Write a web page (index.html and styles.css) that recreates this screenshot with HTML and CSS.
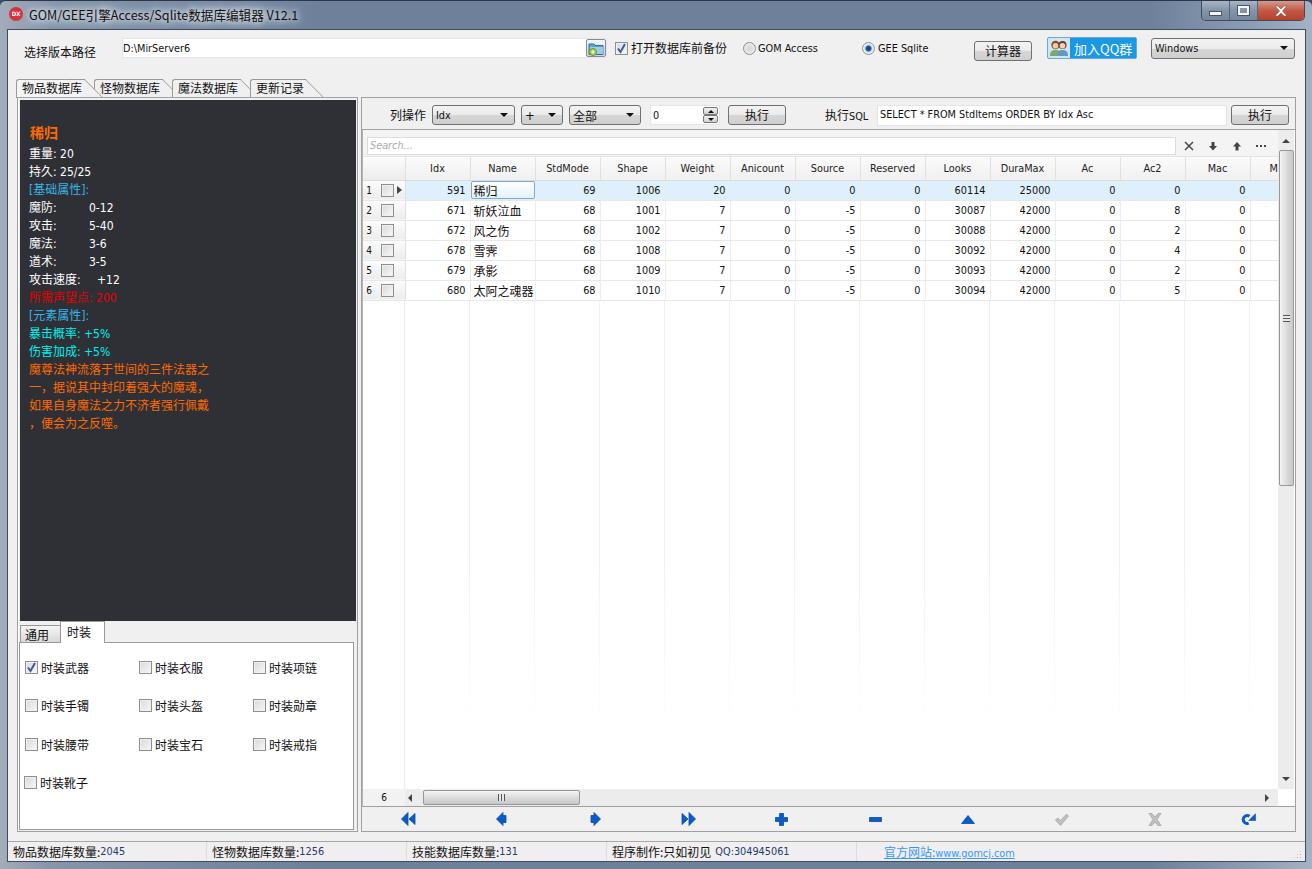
FILE: index.html
```html
<!DOCTYPE html>
<html>
    <head>
        <title>GOM/GEE引擎Access/Sqlite数据库编辑器 V12.1</title>
        <meta charset="UTF-8">
        <link rel="stylesheet" href="styles.css">
    </head>
    <body>
        <div class="window">
            <div class="titlebar">
                <div class="app-icon">DX</div>
                <div class="title-text">GOM/GEE引擎Access/Sqlite数据库编辑器 V12.1</div>
                <div class="win-buttons">
                    <div class="win-btn win-min"><span class="min-glyph"></span></div>
                    <div class="win-btn win-max"><span class="max-glyph"></span></div>
                    <div class="win-btn win-close">
                        <svg width="16" height="12" viewBox="0 0 16 12"><path d="M2 1h3l3 3 3-3h3l-4.500 5 4.500 5h-3l-3-3-3 3h-3l4.500-5z" fill="#fff" stroke="#8a4a40" stroke-width=".6"/></svg>
                    </div>
                </div>
            </div>

            <div class="client">
                <div class="pathbar">
                    <div class="path-label cn">选择版本路径</div>
                    <div class="path-input">
                        <span>D:\MirServer6</span>
                        <div class="folder-btn">
                            <svg width="16" height="15" viewBox="0 0 16 15">
                                <path d="M1 3h5l1 1.500h8v9h-14z" fill="#5ba4d8" stroke="#2f6f9f"/>
                                <path d="M2 6h13v7h-13z" fill="#9ccbec"/>
                                <circle cx="5" cy="11" r="3.500" fill="#9fd24a" stroke="#6d9a22"/>
                                <path d="M3.200 11h3.600M5 9.200v3.600" stroke="#fff" stroke-width="1.200"/>
                            </svg>
                        </div>
                    </div>
                    <div class="check checked backup-check"><svg class="tick" width="13" height="13" viewBox="0 0 13 13"><path d="M3 6.500l2.500 3.500 4.500-8" fill="none" stroke="#3c5a9c" stroke-width="2"/></svg></div>
                    <div class="backup-text cn">打开数据库前备份</div>
                    <div class="radio radio-gom"></div>
                    <div class="radio-text gom-text">GOM Access</div>
                    <div class="radio radio-on"></div>
                    <div class="radio-text gee-text">GEE Sqlite</div>
                    <div class="btn calc-btn cn">计算器</div>
                    <div class="qq-btn">
                        <div class="qq-icon">
                            <svg width="20" height="18" viewBox="0 0 20 18">
                                <circle cx="6.500" cy="6" r="4.200" fill="#8a4a2a"/>
                                <circle cx="6.500" cy="6.800" r="2.800" fill="#f4c9a4"/>
                                <path d="M1 17c0-4.500 2-6 5.500-6s5.500 1.500 5.500 6z" fill="#7fa86c"/>
                                <circle cx="13.500" cy="6" r="4" fill="#6b3a22"/>
                                <circle cx="13.500" cy="6.800" r="2.800" fill="#f7d3b3"/>
                                <path d="M8.500 17c0-4.500 1.500-6 5-6s5.500 1.500 5.500 6z" fill="#5f9ac0"/>
                            </svg>
                        </div>
                        <div class="qq-text cn">加入QQ群</div>
                    </div>
                    <div class="combo theme-combo"><span>Windows</span><i class="caret"></i></div>
                </div>

                <div class="tabs">
                    <div class="tab tab-active cn">物品数据库</div>
                    <div class="tab cn">怪物数据库</div>
                    <div class="tab cn">魔法数据库</div>
                    <div class="tab tab-short cn">更新记录</div>
                </div>

                <div class="tab-body">
                    <div class="left-pane">
                        <div class="item-card">
                            <div class="item-name">稀归</div>
                            <div>重量: 20</div>
                            <div>持久: 25/25</div>
                            <div class="c-blue">[基础属性]:</div>
                            <div><span class="stat">魔防:</span>0-12</div>
                            <div><span class="stat">攻击:</span>5-40</div>
                            <div><span class="stat">魔法:</span>3-6</div>
                            <div><span class="stat">道术:</span>3-5</div>
                            <div><span class="stat stat-long">攻击速度:</span>+12</div>
                            <div class="c-red">所需声望点: 200</div>
                            <div class="c-blue">[元素属性]:</div>
                            <div class="c-cyan">暴击概率: +5%</div>
                            <div class="c-cyan">伤害加成: +5%</div>
                            <div class="c-orange">魔尊法神流落于世间的三件法器之</div>
                            <div class="c-orange">一，据说其中封印着强大的魔魂，</div>
                            <div class="c-orange">如果自身魔法之力不济者强行佩戴</div>
                            <div class="c-orange">，便会为之反噬。</div>
                        </div>
                        <div class="sub-tabs cn">
                            <div class="sub-tab">通用</div>
                            <div class="sub-tab sub-tab-active">时装</div>
                        </div>
                        <div class="fashion-panel cn">
                            <div class="fashion-item"><div class="check checked"><svg class="tick" width="13" height="13" viewBox="0 0 13 13"><path d="M3 6.500l2.500 3.500 4.500-8" fill="none" stroke="#3c5a9c" stroke-width="2"/></svg></div>时装武器</div>
                            <div class="fashion-item"><div class="check"></div>时装衣服</div>
                            <div class="fashion-item"><div class="check"></div>时装项链</div>
                            <div class="fashion-item"><div class="check"></div>时装手镯</div>
                            <div class="fashion-item"><div class="check"></div>时装头盔</div>
                            <div class="fashion-item"><div class="check"></div>时装勋章</div>
                            <div class="fashion-item"><div class="check"></div>时装腰带</div>
                            <div class="fashion-item"><div class="check"></div>时装宝石</div>
                            <div class="fashion-item"><div class="check"></div>时装戒指</div>
                            <div class="fashion-item fashion-last"><div class="check"></div>时装靴子</div>
                        </div>
                    </div>

                    <div class="right-pane">
                        <div class="sql-bar">
                            <div class="sql-label ops-label cn">列操作</div>
                            <div class="combo idx-combo"><span>Idx</span><i class="caret"></i></div>
                            <div class="combo plus-combo"><span>+</span><i class="caret"></i></div>
                            <div class="combo all-combo"><span class="cn">全部</span><i class="caret"></i></div>
                            <div class="spin">
                                <span>0</span>
                                <div class="spin-btns">
                                    <div class="spin-btn"><div class="spin-up"></div></div>
                                    <div class="spin-btn"><div class="spin-down"></div></div>
                                </div>
                            </div>
                            <div class="btn run-btn cn">执行</div>
                            <div class="sql-label sql-text"><span class="cn">执行</span>SQL</div>
                            <div class="sql-input">SELECT * FROM StdItems ORDER BY Idx Asc</div>
                            <div class="btn run-btn cn">执行</div>
                        </div>

                        <div class="grid-frame">
                            <div class="grid-main">
                                <div class="search-row">
                                    <div class="search-box">Search...</div>
                                    <div class="search-tool">
                                        <svg width="10" height="10" viewBox="0 0 10 10"><path d="M1 1l8 8M9 1l-8 8" stroke="#444" stroke-width="1.500"/></svg>
                                    </div>
                                    <div class="search-tool">
                                        <svg width="10" height="10" viewBox="0 0 10 10"><path d="M3.500 1h3v4h2.500l-4 4.500-4-4.500h2.500z" fill="#444"/></svg>
                                    </div>
                                    <div class="search-tool">
                                        <svg width="10" height="10" viewBox="0 0 10 10"><path d="M3.500 9.500h3v-4h2.500l-4-4.500-4 4.500h2.500z" fill="#444"/></svg>
                                    </div>
                                    <div class="search-tool">
                                        <svg width="10" height="10" viewBox="0 0 10 10"><path d="M0 4h2v2h-2zM4 4h2v2h-2zM8 4h2v2h-2z" fill="#444"/></svg>
                                    </div>
                                </div>
                                <div class="table-wrap">
                                    <table class="data-table">
                                        <thead>
                                            <tr>
                                                <th class="row-head"></th>
                                                <th>Idx</th><th>Name</th><th>StdMode</th><th>Shape</th><th>Weight</th><th>Anicount</th><th>Source</th>
                                                <th>Reserved</th><th>Looks</th><th>DuraMax</th><th>Ac</th><th>Ac2</th><th>Mac</th><th>Mac2</th>
                                            </tr>
                                        </thead>
                                        <tbody>
                                            <tr class="row-current">
                                                <td class="row-head"><div class="row-head-in"><span class="row-num">1</span><div class="check"></div><i class="row-mark"></i></div></td>
                                                <td>591</td><td class="name-cell"><div class="name-focus">稀归</div></td><td>69</td><td>1006</td><td>20</td><td>0</td><td>0</td><td>0</td><td>60114</td><td>25000</td><td>0</td><td>0</td><td>0</td><td></td>
                                            </tr>
                                            <tr>
                                                <td class="row-head"><div class="row-head-in"><span class="row-num">2</span><div class="check"></div></div></td>
                                                <td>671</td><td class="name-cell">斩妖泣血</td><td>68</td><td>1001</td><td>7</td><td>0</td><td>-5</td><td>0</td><td>30087</td><td>42000</td><td>0</td><td>8</td><td>0</td><td></td>
                                            </tr>
                                            <tr>
                                                <td class="row-head"><div class="row-head-in"><span class="row-num">3</span><div class="check"></div></div></td>
                                                <td>672</td><td class="name-cell">风之伤</td><td>68</td><td>1002</td><td>7</td><td>0</td><td>-5</td><td>0</td><td>30088</td><td>42000</td><td>0</td><td>2</td><td>0</td><td></td>
                                            </tr>
                                            <tr>
                                                <td class="row-head"><div class="row-head-in"><span class="row-num">4</span><div class="check"></div></div></td>
                                                <td>678</td><td class="name-cell">雪霁</td><td>68</td><td>1008</td><td>7</td><td>0</td><td>-5</td><td>0</td><td>30092</td><td>42000</td><td>0</td><td>4</td><td>0</td><td></td>
                                            </tr>
                                            <tr>
                                                <td class="row-head"><div class="row-head-in"><span class="row-num">5</span><div class="check"></div></div></td>
                                                <td>679</td><td class="name-cell">承影</td><td>68</td><td>1009</td><td>7</td><td>0</td><td>-5</td><td>0</td><td>30093</td><td>42000</td><td>0</td><td>2</td><td>0</td><td></td>
                                            </tr>
                                            <tr>
                                                <td class="row-head"><div class="row-head-in"><span class="row-num">6</span><div class="check"></div></div></td>
                                                <td>680</td><td class="name-cell">太阿之魂器</td><td>68</td><td>1010</td><td>7</td><td>0</td><td>-5</td><td>0</td><td>30094</td><td>42000</td><td>0</td><td>5</td><td>0</td><td></td>
                                            </tr>
                                        </tbody>
                                    </table>
                                    <div class="table-empty"></div>
                                </div>
                                <div class="h-scroll">
                                    <div class="row-count">6</div>
                                    <i class="arrow-left"></i>
                                    <div class="h-thumb"><span class="grip-v"></span></div>
                                    <i class="arrow-right"></i>
                                </div>
                            </div>
                            <div class="v-scroll">
                                <i class="arrow-up"></i>
                                <div class="v-thumb"><span class="grip-h"></span></div>
                                <i class="arrow-down"></i>
                            </div>
                        </div>

                        <div class="nav-bar">
                            <div class="nav-btn"><svg width="15" height="14" viewBox="0 0 15 14"><path d="M7 .5v13l-6.500-6.500zM14 1.500v11l-6-5.500z" fill="#0a5ccb" stroke="#0b4aa8" stroke-width=".8"/></svg></div>
                            <div class="nav-btn"><svg width="11" height="14" viewBox="0 0 11 14"><path d="M7 .5v3h3v7h-3v3l-6.500-6.500z" fill="#0a5ccb" stroke="#0b4aa8" stroke-width=".8"/></svg></div>
                            <div class="nav-btn"><svg width="11" height="14" viewBox="0 0 11 14"><path d="M4 .5v3h-3v7h3v3l6.500-6.500z" fill="#0a5ccb" stroke="#0b4aa8" stroke-width=".8"/></svg></div>
                            <div class="nav-btn"><svg width="15" height="14" viewBox="0 0 15 14"><path d="M8 .5v13l6.500-6.500zM1 1.500v11l6-5.500z" fill="#0a5ccb" stroke="#0b4aa8" stroke-width=".8"/></svg></div>
                            <div class="nav-btn"><svg width="13" height="13" viewBox="0 0 13 13"><path d="M4.500.5h4v4h4v4h-4v4h-4v-4h-4v-4h4z" fill="#0a5ccb" stroke="#0b4aa8" stroke-width=".8"/></svg></div>
                            <div class="nav-btn"><svg width="13" height="5" viewBox="0 0 13 5"><path d="M.5.5h12v4h-12z" fill="#0a5ccb" stroke="#0b4aa8" stroke-width=".8"/></svg></div>
                            <div class="nav-btn"><svg width="14" height="9" viewBox="0 0 14 9"><path d="M7 .5l6.500 8h-13z" fill="#0a5ccb" stroke="#0b4aa8" stroke-width=".8"/></svg></div>
                            <div class="nav-btn"><svg width="14" height="13" viewBox="0 0 14 13"><path d="M.5 7l2.500-2 2.500 2.500 6-6.500 2 2-8 9.500z" fill="#c0c0c0" stroke="#a4a4a4" stroke-width=".8"/></svg></div>
                            <div class="nav-btn"><svg width="14" height="13" viewBox="0 0 14 13"><path d="M1 .5h3l3 3.500 3-3.500h3l-4 6 4 6h-3l-3-3.500-3 3.500h-3l4-6z" fill="#c0c0c0" stroke="#a4a4a4" stroke-width=".8"/></svg></div>
                            <div class="nav-btn"><svg width="15" height="12" viewBox="0 0 15 12"><path d="M8.500 3.200a4 4 0 1 0-.8 7" fill="none" stroke="#0a5ccb" stroke-width="3"/><path d="M14.500 .8v6.700h-6.700z" fill="#0a5ccb" stroke="#0b4aa8" stroke-width=".6"/></svg></div>
                        </div>
                    </div>
                </div>

                <div class="status-bar">
                    <div class="status-cell status-1"><span class="cn">物品数据库数量:</span><span class="num">2045</span></div>
                    <div class="status-cell status-2"><span class="cn">怪物数据库数量:</span><span class="num">1256</span></div>
                    <div class="status-cell status-2"><span class="cn">技能数据库数量:</span><span class="num">131</span></div>
                    <div class="status-cell status-4"><span class="cn">程序制作:只如初见</span><span class="num qq-num">QQ:304945061</span></div>
                    <div class="status-cell status-5"><span class="status-link"><span class="cn">官方网站:</span>www.gomcj.com</span></div>
                    <div class="size-grip"></div>
                </div>
            </div>
        </div>
    </body>
</html>
```

FILE: styles.css
```css
body{
    margin: 0;
    background: #3b4d63;
    font-family: "DejaVu Sans Condensed", "DejaVu Sans", "Noto Sans CJK SC", sans-serif;
    font-size: 10.800px;
    color: #111;
}

.cn{
    font-family: "Noto Sans CJK SC", sans-serif;
    font-size: 12px;
}

.window{
    width: 1312px;
    height: 869px;
    overflow: hidden;
    display: flex;
    flex-direction: column;
    box-sizing: border-box;
    border-top: 1px solid #2c3848;
    border-radius: 6px 6px 0 0;
    background: linear-gradient(90deg, #a3adba 0, #8595aa 50px, #6d819b 320px, #6d819b 1150px, #93a3b8 1270px, #a4b2c4 1312px);
}

/* title bar */
.titlebar{
    height: 28px;
    display: flex;
    align-items: center;
    padding: 0 7px 0 9px;
    flex-shrink: 0;
}

.app-icon{
    width: 14px;
    height: 14px;
    border-radius: 50%;
    background: #d8303c;
    color: #fff;
    font-size: 6px;
    font-weight: bold;
    text-align: center;
    line-height: 14px;
    margin-bottom: 2px;
}

.title-text{
    margin-left: 6px;
    margin-bottom: 2px;
    font-family: "Noto Sans CJK SC", sans-serif;
    font-size: 12.600px;
    color: #111;
    text-shadow: 0 0 6px #fff, 0 0 10px #dfe6ee, 0 0 14px #c8d2de;
}

.win-buttons{
    margin-left: auto;
    align-self: flex-start;
    display: flex;
    height: 19px;
    border: 1px solid #3d4c60;
    border-top: none;
    border-radius: 0 0 5px 5px;
    overflow: hidden;
}

.win-btn{
    display: flex;
    align-items: center;
    justify-content: center;
    background: linear-gradient(#a9b5c5, #8493a8 50%, #76869b);
    border-right: 1px solid #56667c;
}

.win-min{
    width: 27px;
}

.win-max{
    width: 27px;
}

.win-close{
    width: 46px;
    border-right: none;
    background: linear-gradient(#d89a8c, #c05a46 50%, #b8402c);
}

.min-glyph{
    width: 11px;
    height: 3px;
    margin-top: 6px;
    background: #f4f6f8;
    border: 1px solid #4a5668;
}

.max-glyph{
    width: 7px;
    height: 5px;
    border: 2px solid #f4f6f8;
    outline: 1px solid #4a5668;
}

/* client area */
.client{
    margin: 0 6px 7px 7px;
    flex: 1;
    min-height: 0;
    background: #f0f0f0;
    border: 1px solid #3d4c60;
    display: flex;
    flex-direction: column;
}

.pathbar{
    height: 48px;
    box-sizing: border-box;
    padding-bottom: 14px;
    display: flex;
    align-items: center;
    flex-shrink: 0;
}

.path-label{
    margin-left: 16px;
    margin-top: 9px;
    width: 98px;
}

.path-input{
    width: 485px;
    height: 20px;
    box-sizing: border-box;
    background: #fff;
    border: 1px solid #e4e4ea;
    display: flex;
    align-items: center;
    margin-top: 2px;
}

.folder-btn{
    margin-left: auto;
    width: 20px;
    height: 18px;
    box-sizing: border-box;
    border: 1px solid #8a8a8a;
    border-radius: 2px;
    background: linear-gradient(#f6f6f6, #d4d4d4);
    display: flex;
    align-items: center;
    justify-content: center;
}

.check{
    width: 13px;
    height: 13px;
    box-sizing: border-box;
    border: 1px solid #8e8f8f;
    background: linear-gradient(135deg, #d8d8d8, #f8f8f8);
    box-shadow: inset 0 0 0 1px #f0f0f0;
    flex-shrink: 0;
    position: relative;
}

.tick{
    position: absolute;
    left: -1px;
    top: -1px;
}

.backup-check{
    margin-left: 8px;
    margin-top: 2px;
}

.backup-text{
    margin-left: 3px;
    width: 112px;
    margin-top: 1px;
}

.radio{
    width: 13px;
    height: 13px;
    box-sizing: border-box;
    border-radius: 50%;
    border: 1px solid #8e8f8f;
    background: radial-gradient(circle, #d4d4d4, #f4f4f4);
    margin-top: 2px;
}

.radio-on{
    background: radial-gradient(circle, #0e3a78 0, #1f5fa8 2.500px, #c8d8e6 3.500px, #eef2f6 5px);
}

.radio-text{
    margin-left: 2px;
    margin-top: 2px;
}

.gom-text{
    width: 104px;
}

.gee-text{
    margin-left: 3px;
    width: 96px;
}

.btn{
    box-sizing: border-box;
    width: 58px;
    height: 20px;
    border: 1px solid #707070;
    border-radius: 3px;
    background: linear-gradient(#f3f3f3, #ebebeb 50%, #d6d6d6 50%, #cfcfcf);
    text-align: center;
    line-height: 17px;
    flex-shrink: 0;
}

.calc-btn{
    margin-top: 8px;
}

.qq-btn{
    margin-left: 15px;
    margin-top: 2px;
    width: 90px;
    height: 22px;
    box-sizing: border-box;
    border: 1px solid #6aa9d8;
    border-radius: 2px;
    background: #1b98e4;
    display: flex;
    align-items: center;
    overflow: hidden;
}

.qq-icon{
    width: 22px;
    height: 100%;
    background: #cfe6f4;
    display: flex;
    align-items: center;
    justify-content: center;
}

.qq-text{
    margin-left: 4px;
    color: #fff;
    font-size: 13px;
    white-space: nowrap;
}

.combo{
    box-sizing: border-box;
    height: 20px;
    border: 1px solid #707070;
    border-radius: 3px;
    background: linear-gradient(#f3f3f3, #ebebeb 50%, #d6d6d6 50%, #cfcfcf);
    display: flex;
    align-items: center;
    padding: 0 6px 0 3px;
    flex-shrink: 0;
}

.caret{
    margin-left: auto;
    width: 0;
    height: 0;
    border-left: 4px solid transparent;
    border-right: 4px solid transparent;
    border-top: 4px solid #111;
}

.theme-combo{
    margin-left: 14px;
    margin-top: 2px;
    width: 144px;
    height: 21px;
}

/* main tabs */
.tabs{
    height: 20px;
    margin-left: 8px;
    display: flex;
    align-items: flex-end;
    flex-shrink: 0;
    margin-bottom: -1px;
    position: relative;
    z-index: 0;
}

.tab{
    width: 68px;
    height: 19px;
    margin-right: 10px;
    box-sizing: border-box;
    padding-left: 5px;
    line-height: 16px;
    border-top: 1px solid #999;
    border-left: 1px solid #999;
    border-radius: 3px 0 0 0;
    background: #f0f0f0;
    position: relative;
    white-space: nowrap;
}

.tab::after{
    content: "";
    position: absolute;
    top: -1px;
    right: -10px;
    width: 20px;
    height: 19px;
    box-sizing: border-box;
    border-top: 1px solid #999;
    border-right: 1px solid #999;
    background: #f0f0f0;
    transform: skewX(45deg);
    z-index: -1;
}

.tab-short{
    width: 55px;
}

.tab-active{
    z-index: 1;
    background: #f4f4f4;
}

.tab-body{
    height: 735px;
    display: flex;
    margin-left: 9px;
    flex-shrink: 0;
    gap: 3px;
    background: #f0f0f0;
    position: relative;
    z-index: 1;
}

/* left side */
.left-pane{
    width: 341px;
    box-sizing: border-box;
    border: 1px solid #a0a0a0;
    padding: 2px 3px 1px 0;
    display: flex;
    flex-direction: column;
    box-shadow: inset 1px 0 0 #fff;
}

.item-card{
    margin-left: 2px;
    margin-right: -2px;
    height: 521px;
    box-sizing: border-box;
    padding: 24px 0 0 9px;
    background: #2e3036;
    color: #fff;
    font-size: 12px;
    line-height: 18px;
    flex-shrink: 0;
}

.item-name{
    color: #ff6a00;
    font-size: 14px;
    font-weight: bold;
    margin-left: 1px;
    height: 21px;
}

.stat{
    display: inline-block;
    width: 60px;
}

.stat-long{
    width: 68px;
}

.c-blue{
    color: #35b4e8;
}

.c-red{
    color: #e60000;
}

.c-cyan{
    color: #00f0f0;
}

.c-orange{
    color: #ff6a00;
}

.sub-tabs{
    height: 22px;
    display: flex;
    align-items: flex-end;
    margin-left: 2px;
    flex-shrink: 0;
    margin-bottom: -1px;
    position: relative;
}

.sub-tab{
    width: 40px;
    height: 18px;
    box-sizing: border-box;
    padding-left: 4px;
    border: 1px solid #999;
    border-right: none;
    background: linear-gradient(#f6f6f6, #d8d8d8);
    line-height: 18px;
}

.sub-tab-active{
    width: 45px;
    height: 22px;
    padding-left: 6px;
    background: #fff;
    border-right: 1px solid #999;
    border-bottom: none;
    line-height: 19px;
}

.fashion-panel{
    flex: 1;
    margin-left: 1px;
    background: #fff;
    border: 1px solid #999;
    padding: 5px 0 0 5px;
    display: grid;
    grid-template-columns: 114px 114px 114px;
    grid-auto-rows: 38.500px;
    align-items: center;
}

.fashion-item{
    display: flex;
    align-items: center;
    gap: 3px;
}

.fashion-last{
    margin-left: -1px;
}

/* right side */
.right-pane{
    width: 935px;
    box-sizing: border-box;
    border: 1px solid #a0a0a0;
    display: flex;
    flex-direction: column;
}

.sql-bar{
    height: 31px;
    display: flex;
    align-items: center;
    flex-shrink: 0;
    padding-top: 3px;
    box-sizing: border-box;
}

.sql-label{
    white-space: nowrap;
    margin-top: -1px;
}

.ops-label{
    margin-left: 28px;
    width: 42px;
}

.idx-combo{
    width: 83px;
}

.plus-combo{
    width: 42px;
    margin-left: 6px;
    font-size: 13px;
}

.all-combo{
    width: 72px;
    margin-left: 6px;
}

.spin{
    width: 70px;
    height: 20px;
    box-sizing: border-box;
    margin-left: 9px;
    background: #fff;
    border: 1px solid #e4e4ea;
    display: flex;
    align-items: center;
    padding-left: 2px;
}

.spin-btns{
    margin-left: auto;
    width: 15px;
    margin-right: 1px;
    display: flex;
    flex-direction: column;
}

.spin-btn{
    height: 8px;
    box-sizing: border-box;
    border: 1px solid #777;
    border-radius: 2px;
    background: linear-gradient(#f2f2f2, #d0d0d0);
    display: flex;
    justify-content: center;
    align-items: center;
}

.spin-up{
    width: 0;
    height: 0;
    border-left: 3px solid transparent;
    border-right: 3px solid transparent;
    border-bottom: 3px solid #111;
}

.spin-down{
    width: 0;
    height: 0;
    border-left: 3px solid transparent;
    border-right: 3px solid transparent;
    border-top: 3px solid #111;
}

.run-btn{
    margin-left: 8px;
}

.sql-text{
    margin-left: 39px;
    width: 52px;
}

.sql-input{
    width: 350px;
    height: 21px;
    box-sizing: border-box;
    background: #fff;
    border: 1px solid #e4e4ea;
    padding-left: 2px;
    line-height: 17px;
}

.sql-input + .run-btn{
    margin-left: 4px;
}

.grid-frame{
    height: 678px;
    box-sizing: border-box;
    border: 1px solid #a0a0a0;
    border-left-color: #b4b4b4;
    border-right: none;
    display: flex;
    background: #fff;
    flex-shrink: 0;
}

.grid-main{
    width: 915px;
    display: flex;
    flex-direction: column;
}

.search-row{
    height: 27px;
    box-sizing: border-box;
    background: #f4f4f4;
    border-bottom: 1px solid #e4e4e4;
    display: flex;
    align-items: center;
    padding: 5px 0 0 4px;
    flex-shrink: 0;
}

.search-box{
    width: 809px;
    height: 18px;
    box-sizing: border-box;
    background: #fff;
    border: 1px solid #dcdcdc;
    color: #aaa;
    font-style: italic;
    padding-left: 2px;
    line-height: 15px;
    margin-right: 1px;
}

.search-tool{
    width: 24px;
    display: flex;
    justify-content: center;
}

.table-wrap{
    flex: 1;
    min-height: 0;
    overflow: hidden;
    display: flex;
    flex-direction: column;
}

.data-table{
    border-collapse: collapse;
    table-layout: fixed;
    width: 952px;
    flex-shrink: 0;
}

.data-table th{
    width: 65px;
    height: 23px;
    padding: 1px 0 0;
    box-sizing: border-box;
    font-weight: normal;
    color: #222;
    background: linear-gradient(#fafafa, #f0f0f0);
    border-right: 1px solid #e0e0e0;
    border-bottom: 1px solid #dcdcdc;
    white-space: nowrap;
}

.data-table td{
    height: 20px;
    padding: 0 4px 0 0;
    box-sizing: border-box;
    text-align: right;
    border-right: 1px solid #ececec;
    border-bottom: 1px solid #e8e8e8;
    white-space: nowrap;
}

.data-table .row-head{
    width: 42px;
    padding: 0;
    background: linear-gradient(#fcfcfc, #ececec);
    border-right: 1px solid #e0e0e0;
}

.row-head-in{
    display: flex;
    align-items: center;
    height: 19px;
}

.row-num{
    width: 18px;
    box-sizing: border-box;
    padding-right: 6px;
    text-align: center;
    font-size: 10px;
}

.row-mark{
    margin-left: 3px;
    width: 0;
    height: 0;
    border-top: 4px solid transparent;
    border-bottom: 4px solid transparent;
    border-left: 5px solid #444;
}

.row-current td{
    background: #dff0fd;
}

.data-table .name-cell{
    text-align: left;
    padding-left: 3px;
    font-family: "Noto Sans CJK SC", sans-serif;
    font-size: 12px;
}

.data-table .row-current .name-cell{
    padding: 0;
}

.name-focus{
    height: 18px;
    line-height: 17px;
    padding-left: 2px;
    box-sizing: border-box;
    border: 1px solid #7ba8dc;
    border-radius: 2px;
    background: linear-gradient(#ffffff, #e4f2fd);
}

.table-empty{
    flex: 1;
    margin-left: 41px;
    background:
        linear-gradient(rgba(255, 255, 255, 0) 50%, #fff 90%),
        repeating-linear-gradient(90deg, transparent 0, transparent 64px, #f0f0f0 64px, #f0f0f0 65px);
    border-left: 1px solid #ececec;
}

.h-scroll{
    height: 17px;
    background: #ececec;
    display: flex;
    align-items: center;
    flex-shrink: 0;
}

.row-count{
    width: 42px;
    text-align: center;
    font-size: 10px;
    background: #f2f2f2;
    height: 100%;
    line-height: 17px;
}

.arrow-left{
    margin-left: 3px;
    margin-right: 11px;
    width: 0;
    height: 0;
    border-top: 4px solid transparent;
    border-bottom: 4px solid transparent;
    border-right: 4px solid #444;
}

.arrow-right{
    margin-left: auto;
    margin-right: 9px;
    width: 0;
    height: 0;
    border-top: 4px solid transparent;
    border-bottom: 4px solid transparent;
    border-left: 4px solid #444;
}

.h-thumb{
    width: 157px;
    height: 15px;
    box-sizing: border-box;
    border: 1px solid #979797;
    border-radius: 2px;
    background: linear-gradient(#f4f4f4, #dcdcdc 50%, #c8c8c8);
    display: flex;
    align-items: center;
    justify-content: center;
}

.grip-v{
    width: 7px;
    height: 7px;
    background: repeating-linear-gradient(90deg, #555 0, #555 1px, #e8e8e8 1px, #e8e8e8 3px);
}

.v-scroll{
    width: 16px;
    height: 659px;
    background: #ececec;
    display: flex;
    flex-direction: column;
    align-items: center;
    box-sizing: border-box;
    padding-top: 9px;
}

.arrow-up{
    width: 0;
    height: 0;
    border-left: 4px solid transparent;
    border-right: 4px solid transparent;
    border-bottom: 4px solid #444;
    margin-bottom: 7px;
}

.arrow-down{
    margin-top: auto;
    margin-bottom: 8px;
    width: 0;
    height: 0;
    border-left: 4px solid transparent;
    border-right: 4px solid transparent;
    border-top: 4px solid #444;
}

.v-thumb{
    width: 15px;
    height: 336px;
    box-sizing: border-box;
    border: 1px solid #979797;
    border-radius: 2px;
    background: linear-gradient(90deg, #f4f4f4, #dcdcdc 50%, #c8c8c8);
    display: flex;
    align-items: center;
    justify-content: center;
}

.grip-h{
    width: 7px;
    height: 7px;
    background: repeating-linear-gradient(0deg, #555 0, #555 1px, #e8e8e8 1px, #e8e8e8 3px);
}

.nav-bar{
    flex: 1;
    display: flex;
    align-items: center;
}

.nav-btn{
    flex: 1;
    display: flex;
    justify-content: center;
    align-items: center;
}

/* status bar */
.status-bar{
    margin-top: 9px;
    height: 20px;
    box-sizing: border-box;
    border-top: 1px solid #a8a8a8;
    background: #f0eeee;
    display: flex;
    align-items: center;
    flex-shrink: 0;
}

.status-cell{
    height: 100%;
    box-sizing: border-box;
    border-right: 1px solid #dcdcdc;
    padding-left: 5px;
    display: flex;
    align-items: center;
    white-space: nowrap;
}

.status-1{
    width: 199px;
}

.status-2{
    width: 200px;
}

.status-4{
    width: 250px;
}

.status-5{
    border-right: none;
    padding-left: 27px;
}

.status-cell .num{
    color: #1f3a6e;
}

.status-cell .qq-num{
    margin-left: 4px;
}

.status-link{
    color: #3399ff;
    text-decoration: underline;
}

.size-grip{
    margin-left: auto;
    margin-right: 3px;
    margin-top: 6px;
    width: 9px;
    height: 9px;
    background: radial-gradient(circle, #a8a8a8 1px, transparent 1px) 0 0 / 3px 3px;
    clip-path: polygon(100% 0, 100% 100%, 0 100%);
}
```
